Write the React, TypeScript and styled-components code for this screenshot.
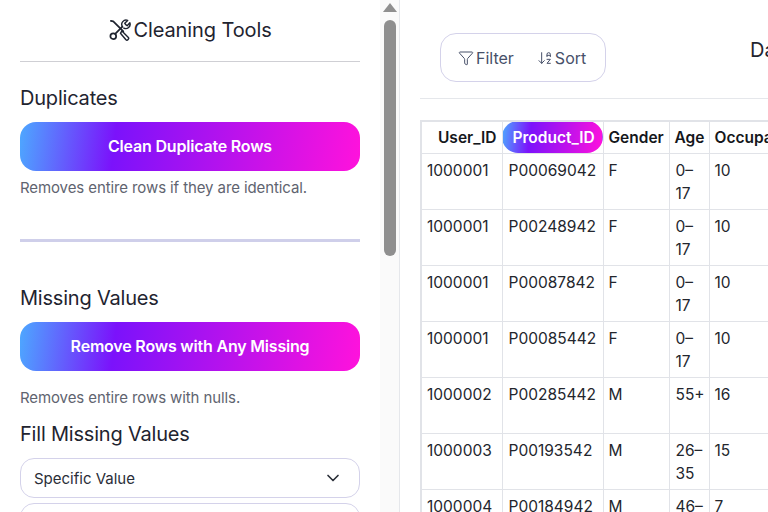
import React from 'react';
import styled, { createGlobalStyle } from 'styled-components';
import { ArrowDownAZ, ChevronDown, Funnel } from 'lucide-react';

const GlobalStyle = createGlobalStyle`
  html, body {
    margin: 0;
    padding: 0;
    width: 768px;
    height: 512px;
    overflow: hidden;
    background: #fff;
    font-family: 'Inter', 'Noto Sans', sans-serif;
  }
  * { box-sizing: border-box; }
`;

const Page = styled.div`
  display: flex;
  width: 768px;
  height: 512px;
  overflow: hidden;
`;

const Sidebar = styled.aside`
  display: flex;
  flex: 0 0 400px;
  height: 512px;
  overflow: hidden;
  border-right: 1px solid #e5e7eb;
`;

const SideContent = styled.div`
  flex: 0 0 380px;
  padding: 0 20px;
`;

const ScrollTrack = styled.div`
  flex: 1;
  display: flex;
  flex-direction: column;
  align-items: center;
  background: #fafafa;
  padding-top: 3px;
`;

const ScrollArrow = styled.div`
  width: 0;
  height: 0;
  border-left: 7px solid transparent;
  border-right: 7px solid transparent;
  border-bottom: 9px solid #8f8f8f;
`;

const ScrollThumb = styled.div`
  width: 12px;
  height: 236px;
  margin-top: 8px;
  border-radius: 6px;
  background: #8f8f8f;
`;

const Title = styled.h2`
  display: flex;
  align-items: center;
  justify-content: center;
  gap: 2px;
  height: 62px;
  margin: 0;
  padding-bottom: 2px;
  border-bottom: 1px solid #cfcfd4;
  font-size: 20px;
  font-weight: 400;
  letter-spacing: -0.1px;
  color: #1f2430;
`;

const SectionTitle = styled.h3<{ $top: number }>`
  margin: ${(p) => p.$top}px 0 0;
  font-size: 20px;
  line-height: 28px;
  font-weight: 400;
  letter-spacing: -0.2px;
  color: #1f2430;
`;

const GradientButton = styled.button`
  display: block;
  width: 100%;
  height: 49px;
  margin-top: 10px;
  padding: 0 0 2px;
  border: 0;
  border-radius: 16px;
  background: linear-gradient(97deg, #4da8ff 0%, #7b12fb 28%, #ff12dc 100%);
  color: #fff;
  font-family: inherit;
  font-size: 16px;
  font-weight: 600;
  letter-spacing: -0.2px;
`;

const Hint = styled.p<{ $top: number }>`
  margin: ${(p) => p.$top}px 0 0;
  font-size: 15px;
  line-height: 20px;
  letter-spacing: -0.1px;
  color: #5f6470;
`;

const Divider = styled.hr`
  height: 3px;
  margin: 41px 0 0;
  border: 0;
  background: #cfcfea;
`;

const Select = styled.div`
  display: flex;
  align-items: center;
  justify-content: space-between;
  height: 40px;
  margin-top: 10px;
  padding: 0 16px 0 13px;
  border: 1px solid #d4d2ea;
  border-radius: 14px;
  font-size: 15px;
  color: #2a2e38;
`;

const NextSelect = styled(Select)`
  margin-top: 5px;
`;

const Main = styled.main`
  flex: 1;
  min-width: 0;
  padding: 33px 0 0 20px;
  overflow: hidden;
`;

const TopBar = styled.div`
  display: flex;
  align-items: flex-start;
  height: 66px;
  padding-left: 20px;
  border-bottom: 1px solid #e5e7eb;
  white-space: nowrap;
`;

const ToolPill = styled.div`
  display: flex;
  align-items: center;
  flex: 0 0 166px;
  gap: 23px;
  height: 49px;
  padding-left: 17px;
  border: 1px solid #d4d2ea;
  border-radius: 16px;
`;

const ToolButton = styled.span`
  display: inline-flex;
  align-items: center;
  gap: 2px;
  font-size: 16px;
  color: #475069;
`;

const PreviewTitle = styled.span`
  margin: 5px 0 0 144px;
  font-size: 20px;
  color: #1f2430;
`;

const TableWrap = styled.div`
  margin-top: 21px;
  width: 348px;
  overflow: hidden;
`;

const Table = styled.table`
  table-layout: fixed;
  width: 460px;
  border-collapse: collapse;
  border-top: 2px solid #e1e3e8;
  border-left: 2px solid #e1e3e8;
  font-size: 15.5px;
`;

const Th = styled.th`
  height: 32px;
  padding: 0 5px;
  border: 1px solid #e1e3e8;
  border-top: 0;
  font-size: 15.5px;
  font-weight: 600;
  color: #15171c;
  text-align: left;
  white-space: nowrap;
  overflow: hidden;
`;

const UserTh = styled(Th)`
  text-align: right;
`;

const ActiveTh = styled(Th)`
  padding: 0 3px 0 10px;
  border-radius: 16px;
  background: linear-gradient(97deg, #4da8ff 0%, #7b12fb 28%, #ff12dc 100%);
  color: #fff;
`;

const Td = styled.td`
  height: 56px;
  padding: 5px 5px 0;
  border: 1px solid #e1e3e8;
  vertical-align: top;
  line-height: 23px;
  color: #23262d;

  &:nth-child(2),
  &:nth-child(4) {
    padding-left: 6px;
  }
`;

const ToolsIcon = () => (
  <svg width="23" height="23" viewBox="0 0 24 24" fill="none" stroke="#1f2430" strokeWidth="1.8" strokeLinecap="round" strokeLinejoin="round">
    <path d="M3 3l2.500 0.500L16 14" />
    <path d="M14.500 13.500l6.500 6.500a1.600 1.600 0 0 1-2.500 2.500L13 16z" strokeWidth="1.500" />
    <path d="M7.500 16.500L15 9" />
    <circle cx="5.500" cy="19" r="3" />
    <path d="M15 9a4.500 4.500 0 0 1 5.500-6.500L17.500 5.500l1 1.500 1.500 1 2.800-3A4.500 4.500 0 0 1 16.500 10.500" strokeWidth="1.500" />
  </svg>
);

const rows = [
  ['1000001', 'P00069042', 'F', '0–17', '10'],
  ['1000001', 'P00248942', 'F', '0–17', '10'],
  ['1000001', 'P00087842', 'F', '0–17', '10'],
  ['1000001', 'P00085442', 'F', '0–17', '10'],
  ['1000002', 'P00285442', 'M', '55+', '16'],
  ['1000003', 'P00193542', 'M', '26–35', '15'],
  ['1000004', 'P00184942', 'M', '46–50', '7'],
];

const colWidths = [81, 101, 66, 40, 172];

export default function App() {
  return (
    <Page>
      <GlobalStyle />
      <Sidebar>
        <SideContent>
          <Title>
            <ToolsIcon />
            Cleaning Tools
          </Title>
          <SectionTitle $top={22}>Duplicates</SectionTitle>
          <GradientButton>Clean Duplicate Rows</GradientButton>
          <Hint $top={7}>Removes entire rows if they are identical.</Hint>
          <Divider />
          <SectionTitle $top={42}>Missing Values</SectionTitle>
          <GradientButton>Remove Rows with Any Missing</GradientButton>
          <Hint $top={17}>Removes entire rows with nulls.</Hint>
          <SectionTitle $top={12}>Fill Missing Values</SectionTitle>
          <Select>
            Specific Value
            <ChevronDown size={20} color="#2a2e38" />
          </Select>
          <NextSelect />
        </SideContent>
        <ScrollTrack>
          <ScrollArrow />
          <ScrollThumb />
        </ScrollTrack>
      </Sidebar>
      <Main>
        <TopBar>
          <ToolPill>
            <ToolButton>
              <Funnel size={16} strokeWidth={1.5} />
              Filter
            </ToolButton>
            <ToolButton>
              <ArrowDownAZ size={16} strokeWidth={1.5} />
              Sort
            </ToolButton>
          </ToolPill>
          <PreviewTitle>Data Preview</PreviewTitle>
        </TopBar>
        <TableWrap>
          <Table>
            <colgroup>
              {colWidths.map((w, i) => (
                <col key={i} width={w} />
              ))}
            </colgroup>
            <thead>
              <tr>
                <UserTh>User_ID</UserTh>
                <ActiveTh>Product_ID</ActiveTh>
                <Th>Gender</Th>
                <Th>Age</Th>
                <Th>Occupation</Th>
              </tr>
            </thead>
            <tbody>
              {rows.map((r, i) => (
                <tr key={i}>
                  {r.map((c, j) => (
                    <Td key={j}>{c}</Td>
                  ))}
                </tr>
              ))}
            </tbody>
          </Table>
        </TableWrap>
      </Main>
    </Page>
  );
}
